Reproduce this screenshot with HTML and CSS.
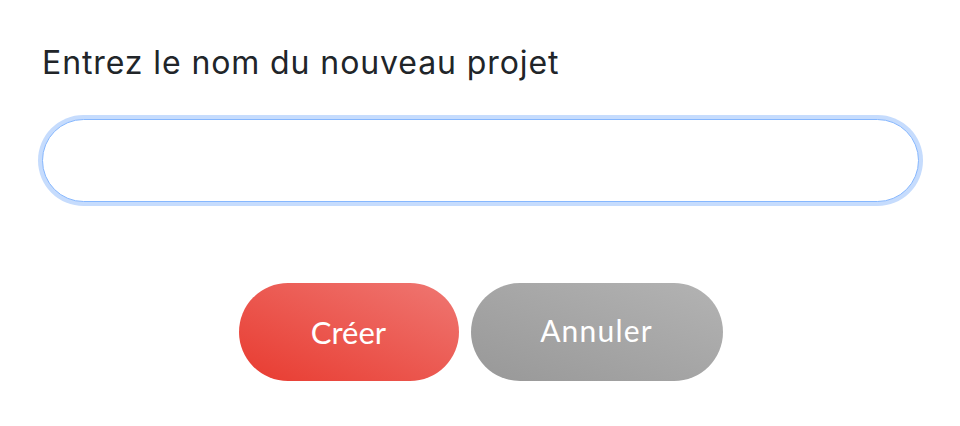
FILE: index.html
```html
<!DOCTYPE html>
<html lang="fr">
<head>
<meta charset="utf-8">
<title>Nouveau projet</title>
<link rel="stylesheet" href="styles.css">
</head>
<body>
<div class="dialog">
  <label class="label" for="name">Entrez le nom du nouveau projet</label>
  <input class="field" id="name" type="text">
  <div class="actions">
    <button class="btn btn-create" type="button">Créer</button>
    <button class="btn btn-cancel" type="button">Annuler</button>
  </div>
</div>
</body>
</html>
```
FILE: styles.css
```css
html, body {
  margin: 0;
  padding: 0;
  background: #ffffff;
}
.dialog {
  padding: 43px 41px 0 42px;
  display: flex;
  flex-direction: column;
}
.label {
  font-family: Inter, Roboto, "Liberation Sans", sans-serif;
  font-size: 32px;
  letter-spacing: 0.9px;
  line-height: 40px;
  color: #212529;
  display: block;
}
.field {
  margin-top: 36px;
  height: 83px;
  box-sizing: border-box;
  border: 1.5px solid #86b7fe;
  border-radius: 42px;
  box-shadow: 0 0 0 4px #c6dcfd;
  outline: none;
  background: #fff;
  padding: 0 30px;
  font-size: 28px;
}
.actions {
  margin-top: 81px;
  display: flex;
  justify-content: center;
  gap: 12px;
}
.btn {
  height: 98px;
  border: none;
  border-radius: 49px;
  color: #fff;
  font-family: Lato, "Noto Sans", sans-serif;
  font-size: 31px;
  padding: 0;
}
.btn-create {
  width: 220px;
  background: linear-gradient(to top right, #e83b30, #ef7772);
}
.btn-cancel {
  width: 252px;
  font-size: 30px;
  letter-spacing: 1.2px;
  background: linear-gradient(to top right, #989898, #b3b3b3);
  padding-bottom: 4px;
}
```
